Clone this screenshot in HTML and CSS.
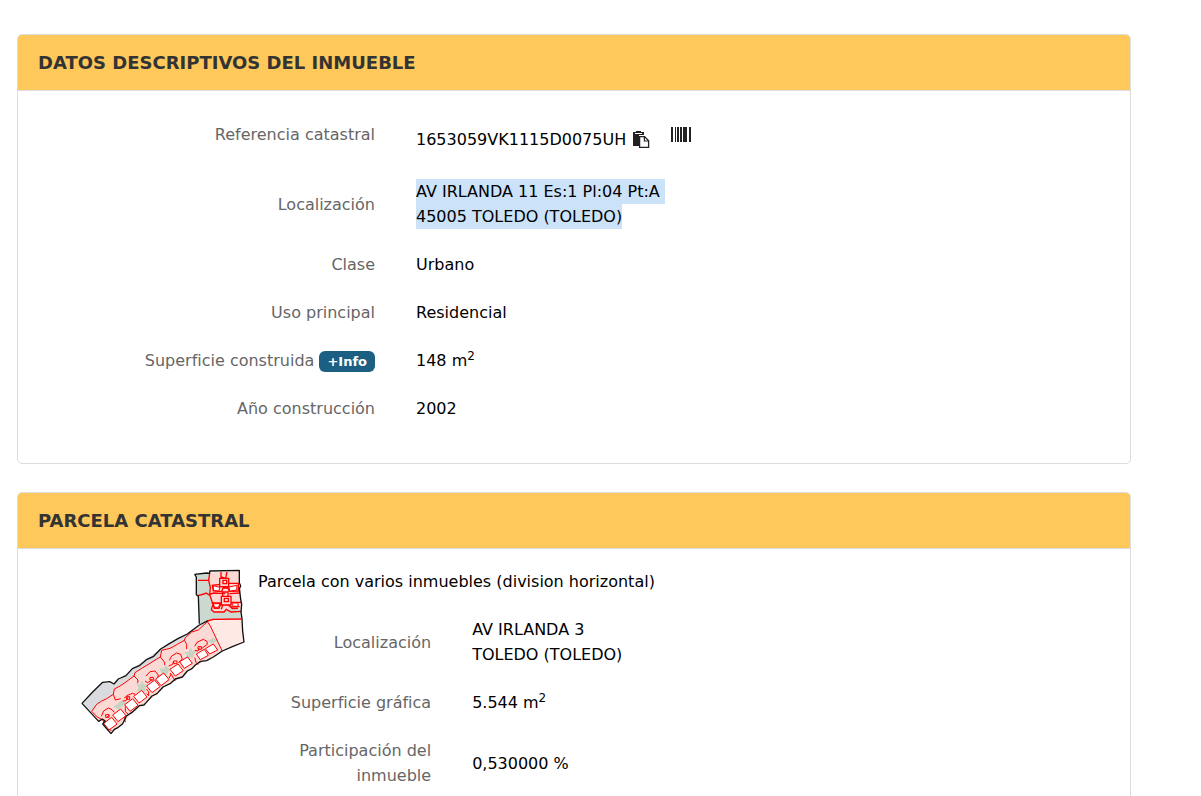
FILE: index.html
```
<!DOCTYPE html>
<html lang="es">
<head>
  <meta charset="UTF-8">
  <title>Datos del inmueble</title>
  <meta name="viewport" content="width=device-width, initial-scale=1">
  <link rel="stylesheet" href="styles.css">
</head>
<body>
  <section class="panel">
    <h2 class="panel-heading">DATOS DESCRIPTIVOS DEL INMUEBLE</h2>
    <div class="panel-body">
      <div class="row row-ref">
        <span class="etiqueta">Referencia catastral</span>
        <div class="valor">
          <span class="referencia">1653059VK1115D0075UH
            <button type="button" class="icono" aria-label="Copiar referencia">
              <svg width="18" height="18" viewBox="0 0 18 18">
                <path fill="#222" d="M1 1h3V0h5v1h3v3H7v11H1z"/>
                <path fill="#fff" d="M3 2h7v1H3z"/>
                <path fill="#fff" stroke="#222" stroke-width="1.3" d="M7.6 5.6h5l4 4.2v6.6h-9z"/>
                <path fill="none" stroke="#222" stroke-width="1.2" d="M12.4 5.6v4.4h4.2"/>
              </svg>
            </button>
          </span>
          <button type="button" class="icono" aria-label="Código de barras">
            <svg width="20" height="15" viewBox="0 0 20 15">
              <path fill="#222" d="M0 0h2v15H0zM4 0h1v15H4zM6 0h2v15H6zM9 0h2v15H9zM12 0h4v15h-4zM18 0h2v15h-2z"/>
            </svg>
          </button>
        </div>
      </div>
      <div class="row">
        <span class="etiqueta">Localización</span>
        <div class="valor"><span class="marcado">AV IRLANDA 11 Es:1 Pl:04 Pt:A&nbsp;<br>45005 TOLEDO (TOLEDO)</span></div>
      </div>
      <div class="row">
        <span class="etiqueta">Clase</span>
        <div class="valor">Urbano</div>
      </div>
      <div class="row">
        <span class="etiqueta">Uso principal</span>
        <div class="valor">Residencial</div>
      </div>
      <div class="row">
        <span class="etiqueta">Superficie construida <button type="button" class="info">+Info</button></span>
        <div class="valor">148 m<sup>2</sup></div>
      </div>
      <div class="row">
        <span class="etiqueta">Año construcción</span>
        <div class="valor">2002</div>
      </div>
    </div>
  </section>

  <section class="panel">
    <h2 class="panel-heading">PARCELA CATASTRAL</h2>
    <div class="parcela">
      <div class="croquis">
        <svg width="166" height="168" viewBox="30 24 498 504" role="img" aria-label="Croquis de la parcela">
          <!-- suelo -->
          <path fill="#ccd9d0" d="M377 40L508 28L510 65L515 128L516 172L414 179L388 188L384 104L379 100z"/>
          <path fill="#d9dbde" d="M36 427L98 364L132 369L187 323L272 264L345 222L414 179L430 200L65 452z"/>
          <path fill="#ffe9e5" d="M414 179L516 173L522 243L457 270z"/>
          <path fill="#fbd9d5" d="M65 451L80 430L130 400L133 384L192 345L195 335L270 288L275 268L343 238L346 230L365 213L414 181L457 270L410 299L376 312L337 348L296 369L254 404L222 432L185 455L158 488L123 518L98 489L106 480L86 481z"/>
          <path fill="#fbd9d5" d="M419 36L506 29L510 68L513 148L485 141L461 153L429 152L419 100z"/>
          <!-- patios -->
          <path fill="#c5d3c2" d="M131 437L156 418L169 426L145 446zM198 366L211 372L216 358L222 371L237 369L226 380L228 397L213 388L201 393L206 379zM268 322L280 323L287 310L294 321L306 323L296 331L289 344L276 338zM342 273L355 274L362 260L368 270L382 270L371 280L370 291L357 287L344 293L351 282zM414 239L430 231L444 239L426 248z"/>
          <!-- divisiones -->
          <g fill="none" stroke="red" stroke-width="3">
            <path d="M65 451L80 430L95 420L110 413L130 400L133 384L150 375L165 365L192 345L195 335L215 322L240 307L262 293L271 288L275 268L300 262L322 250L343 238L346 230L365 213L385 207L412 182L421 195L432 218L445 246L457 270"/>
            <path d="M130 400L136 417L152 413M192 345L204 357L203 366M271 288L284 304V312M343 238L350 250V264M65 451L82 468L98 477L105 489L124 510"/>
            <path d="M94 466L101 450L115 441L126 446L133 454M163 412L170 404L187 397L196 400M158 420L168 419L174 408M228 345L240 332L255 330L265 342L262 352M225 360L233 365L246 356M298 298L305 285L320 276L332 280L337 294L325 306M296 315L308 310L311 300M374 256L381 244L400 235L411 241L412 250L396 262M374 268L384 270L388 260"/>
            <path d="M107 461h10v8h-10zM110 470l8-8M170 407h9v8h-9zM240 349h10v8h-10zM311 300h10v8h-10zM384 257h10v8h-10z"/>
            <path d="M166 436V452L175 460M229 384L236 392V404L230 398M300 336L306 344L316 360M374 290L378 304L385 311M141 452L164 470L166 484M303 340L297 352"/>
          </g>
          <g fill="#fff" stroke="red" stroke-width="3">
            <path d="M101 487l24-18 16 20-24 18zM128 462l24-18 16 20-24 18zM164 431l24-18 16 20-24 18zM191 406l24-18 16 20-24 18zM230 375l24-18 16 20-24 18zM257 354l24-18 16 20-24 18zM300 325l24-16 16 20-24 16zM329 302l24-14 14 19-24 15zM379 279l24-14 12 18-24 13zM406 263l24-14 13 18-24 12z"/>
            <path d="M430 74L450 79L446 91L430 88zM477 78L501 73L500 87L479 91zM430 128H450L445 139H433zM485 126H504V136H490z"/>
          </g>
          <g fill="none" stroke="red" stroke-width="4">
            <path d="M384 58H414M383 104L402 99L408 96L416 101L431 96L466 98M413 180L429 175L514 174M419 36L416 58L421 80L419 101L429 130L424 146L432 153H462L469 145L483 153L513 151"/>
            <path d="M453 32V48L467 52L471 33M449 52H476V77H449zM459 58H470V68H459zM476 67H510M505 67V90L478 91L474 81L459 81L455 92L430 90L427 73L449 70M458 93H474V106H458zM454 106H483V132H454zM463 112H475V122H463zM425 126H453L447 142H433L429 128M484 124H513M483 138L509 137M458 132L454 145M475 132L487 143L504 142M478 98L510 96"/>
          </g>
          <!-- contorno -->
          <path fill="none" stroke="#111" stroke-width="4" stroke-linejoin="bevel" d="M388 188L385 106L379 101V48L374 40L410 36L419 37V30L508 28V65L512 75L508 83L512 115L515 130L513 153L516 173L518 211L522 243L487 257L457 270L430 288L410 299L392 301L376 312L366 323L352 330L337 348L316 354L302 367L279 378L261 398L246 405L229 424L222 432L208 434L185 455L169 465L158 488L145 499L133 505L123 518L98 489L106 480L97 474L86 481L62 455L36 427L68 393L98 364L119 362L132 369L145 354L168 344L187 323L208 314L231 295L251 286L272 264L298 248L325 232L352 219L388 192L414 179"/>
        </svg>
      </div>
      <div class="datos">
        <p class="descripcion">Parcela con varios inmuebles (division horizontal)</p>
        <div class="row">
          <span class="etiqueta">Localización</span>
          <div class="valor">AV IRLANDA 3<br>TOLEDO (TOLEDO)</div>
        </div>
        <div class="row">
          <span class="etiqueta">Superficie gráfica</span>
          <div class="valor">5.544 m<sup>2</sup></div>
        </div>
        <div class="row">
          <span class="etiqueta">Participación del inmueble</span>
          <div class="valor">0,530000 %</div>
        </div>
      </div>
    </div>
  </section>
</body>
</html>
```
FILE: styles.css
```
* {
  box-sizing: border-box;
}

body, button {
  font-family: Verdana, "DejaVu Sans", sans-serif;
}

body {
  margin: 0;
  padding: 34px 70px 0 17px;
  background-color: #fff;
  color: #000;
  font-size: 16px;
  line-height: 25px;
}

.panel {
  margin-bottom: 28px;
  border: 1px solid #ddd;
  border-radius: 5px;
  overflow: hidden;
}

.panel-heading {
  margin: 0;
  padding: 15px 20px;
  background-color: #ffc85b;
  border-bottom: 1px solid #ddd;
  color: #333;
  font-size: 18px;
  font-weight: bold;
  line-height: 25px;
}

.panel-body {
  display: flex;
  flex-direction: column;
  gap: 23px;
  padding: 31px 0 42px;
}

.row {
  display: grid;
  grid-template-columns: 1fr 2fr;
  column-gap: 41px;
  align-items: center;
}

.row-ref {
  align-items: start;
}

.etiqueta {
  color: #666;
  text-align: right;
}

.row-ref .valor {
  display: flex;
  align-items: flex-start;
  gap: 21px;
}

.referencia {
  display: flex;
  align-items: center;
  gap: 6px;
  padding: 5px 0 4px;
}

.icono {
  display: flex;
  align-items: center;
  height: 25px;
  padding: 0;
  border: none;
  background: none;
  cursor: pointer;
}

.marcado {
  padding: 3px 0;
  background-color: #cce2f8;
}

.info {
  height: 21px;
  padding: 0 8px;
  border: none;
  border-radius: 6px;
  background-color: #1b5f83;
  color: #fff;
  font-size: 13px;
  font-weight: bold;
  line-height: 21px;
  cursor: pointer;
}

sup {
  font-size: 12px;
  line-height: 0;
}

.parcela {
  display: flex;
  padding: 20px 0 42px;
}

.croquis {
  flex: none;
  width: 240px;
  padding-left: 62px;
}

.datos {
  flex: 1;
  display: flex;
  flex-direction: column;
  gap: 23px;
}

.datos .row {
  grid-template-columns: 5fr 19fr;
}

.descripcion {
  margin: 0;
}
```
